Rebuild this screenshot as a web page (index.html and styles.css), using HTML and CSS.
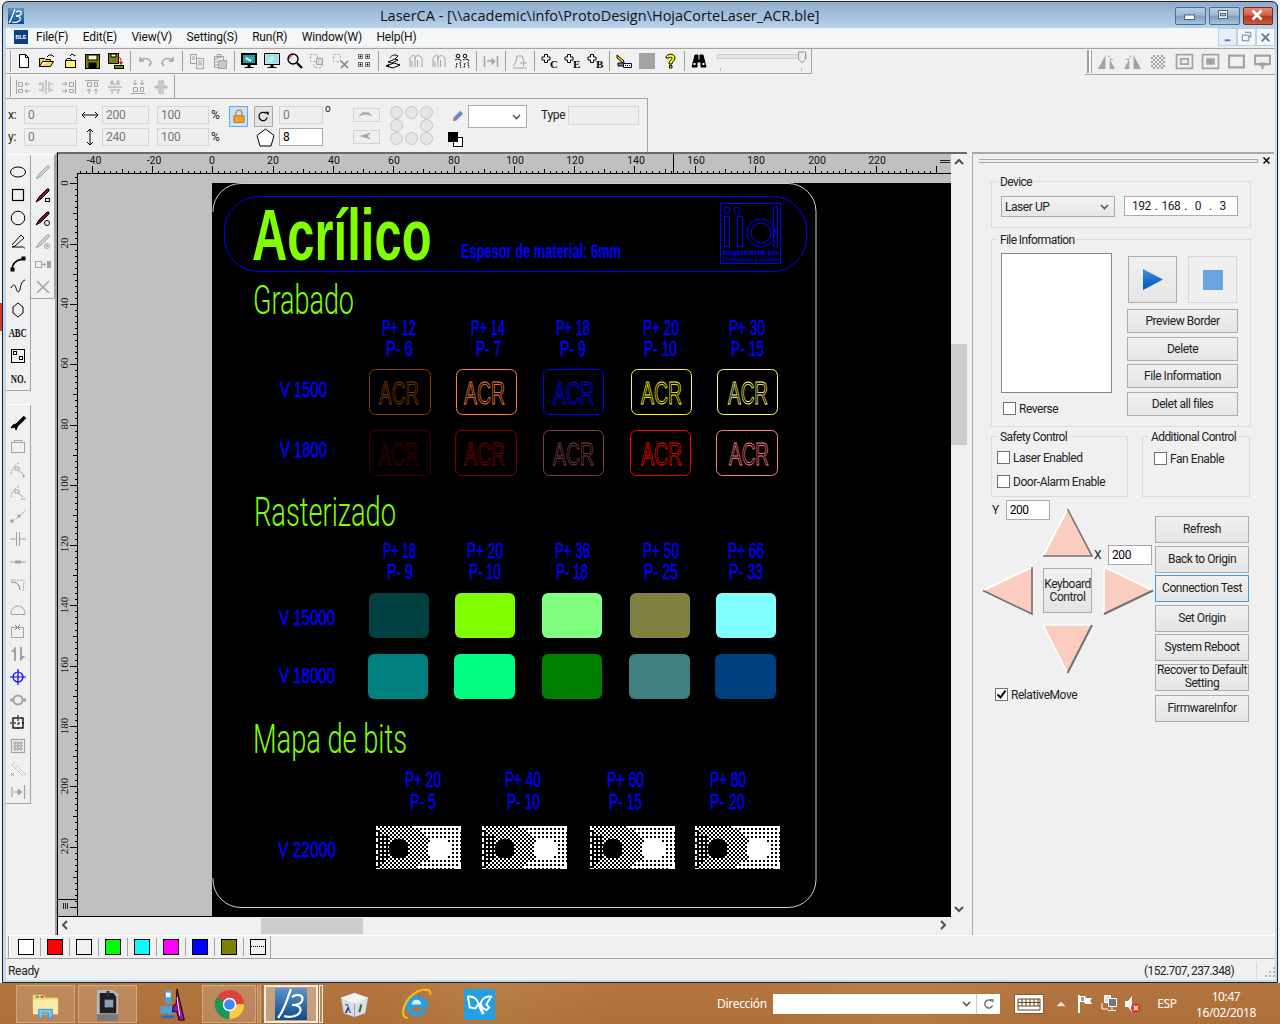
FILE: index.html
```html
<!DOCTYPE html>
<html lang="es">
<head>
<meta charset="utf-8">
<title>LaserCA</title>
<link rel="stylesheet" href="styles.css">
</head>
<body>
<div class="edge-mark"></div>
<div class="window">
  <header class="titlebar">
    <svg class="app-logo" viewBox="0 0 16 16"><defs><linearGradient id="lg1" x1="0" y1="0" x2="0" y2="1"><stop offset="0" stop-color="#5c93c9"/><stop offset="1" stop-color="#0f4a8f"/></linearGradient></defs><rect width="16" height="16" fill="url(#lg1)"/><path d="M7 1C5 5 4 11 1 15M8 4c3-2 6-1 5 2-1 2-4 2-5 2 3 0 5 1 4 4-1 2-5 3-8 2" fill="none" stroke="#fff" stroke-width="1.3"/></svg>
    <div class="title">LaserCA - [\\academic\info\ProtoDesign\HojaCorteLaser_ACR.ble]</div>
    <div class="winctl">
      <div class="wbtn"><svg viewBox="0 0 31 18" class="wglyph"><rect x="10" y="9" width="11" height="5" fill="#fff" stroke="#33506e"/></svg></div>
      <div class="wbtn"><svg viewBox="0 0 31 18" class="wglyph"><rect x="10" y="4" width="10" height="9" fill="#fff" stroke="#33506e"/><rect x="12" y="7" width="6" height="3" fill="#a9c2db" stroke="#33506e"/></svg></div>
      <div class="wbtn wclose"><svg viewBox="0 0 30 18" class="wglyph"><path d="M10 4l10 10M20 4L10 14" stroke="#fff" stroke-width="3" fill="none"/></svg></div>
    </div>
  </header>

  <nav class="menubar">
    <div class="mdi-logo">BLE</div>
    <span class="menu-item">File(F)</span><span class="menu-item">Edit(E)</span><span class="menu-item">View(V)</span><span class="menu-item">Setting(S)</span><span class="menu-item">Run(R)</span><span class="menu-item">Window(W)</span><span class="menu-item">Help(H)</span>
    <div class="mdi-ctl">
      <div class="mbtn mbtn-on"><svg viewBox="0 0 18 17"><path d="M6 12h6" stroke="#5f7fa3" stroke-width="2"/></svg></div>
      <div class="mbtn"><svg viewBox="0 0 18 17"><path d="M7.5 3.5h6v5h-2M4.5 6.5h7v6h-7z" fill="none" stroke="#5f7fa3"/></svg></div>
      <div class="mbtn"><svg viewBox="0 0 18 17"><path d="M5 5l8 8M13 5l-8 8" stroke="#5f7fa3" stroke-width="2"/></svg></div>
    </div>
  </nav>

  <div class="strip strip1">
    <div class="tb tb-main">
      <div class="tbtn"><svg class="ic" viewBox="0 0 16 16"><path d="M3.500 1.500h6l3 3v10h-9z" fill="#fff"/><path d="M9.500 1.500v3h3"/></svg></div>
      <div class="tbtn"><svg class="ic" viewBox="0 0 16 16"><path d="M.5 13.500v-8h5l1 1h5v2h-8l-3 5h11l3-5h-3" fill="#ffd24a"/><path d="M8 4l2-2h3l2 2"/></svg></div>
      <div class="tbtn"><svg class="ic" viewBox="0 0 16 16"><rect x="3.500" y="7.500" width="10" height="7" fill="#fff27a"/><path d="M3.500 7.500l2-2h3l1 2M8 3l2-2 3 2M13 3v-1"/></svg></div>
      <div class="tbtn"><svg class="ic" viewBox="0 0 16 16"><rect x=".5" y="1.500" width="14" height="14" fill="#808000"/><rect x="3" y="2" width="9" height="5" fill="#f4f4c8"/><rect x="4" y="10" width="7" height="5" fill="#000"/></svg></div>
      <div class="tbtn"><svg class="ic" viewBox="0 0 16 16"><rect x=".5" y=".5" width="10" height="10" fill="#808000"/><rect x="3" y="1" width="5" height="3" fill="#f4f4c8"/><rect x="6.500" y="12.500" width="9" height="3" fill="#808000"/><path d="M10 4c3 0 3 3 3 6" stroke="#e00000"/><path d="M11 9h4l-2 3z" fill="#e00000" stroke="none"/></svg></div>
      <div class="tsep"></div>
      <div class="tbtn"><svg class="ic off" viewBox="0 0 16 16"><path d="M3 4v4h4M3 8c3-4 10-3 11 2l-2 3" stroke-width="1.400"/></svg></div>
      <div class="tbtn"><svg class="ic off" viewBox="0 0 16 16"><path d="M13 4v4H9M13 8C10 4 3 5 2 10l2 3" stroke-width="1.400"/></svg></div>
      <div class="tsep"></div>
      <div class="tbtn"><svg class="ic off" viewBox="0 0 16 16"><path d="M1.500 1.500h6v9h-6zM7.500 5.500h7v10h-7zM3 4h3M3 6h3M9 8h4M9 10h4M9 12h4"/></svg></div>
      <div class="tbtn"><svg class="ic off" viewBox="0 0 16 16"><path d="M2.500 3.500h9v11h-9zM5 1.500h4v3H5z"/><path d="M6.500 7.500h8v8h-8z" fill="#c9c9c9"/><path d="M3 6h3M3 9h3M3 12h3"/></svg></div>
      <div class="tsep"></div>
      <div class="tbtn"><svg class="ic" viewBox="0 0 16 16"><rect x=".5" y=".5" width="15" height="11" fill="#000"/><rect x="2" y="2" width="12" height="8" fill="#00c8c8" stroke="none"/><path d="M3 3h10v6H3z" stroke="#e00000" stroke-dasharray="1 1"/><path d="M5 5l5 3" stroke="#fff" stroke-width="2"/><path d="M7 12h2v2H7zM3.500 14.500h9" fill="#000"/></svg></div>
      <div class="tbtn"><svg class="ic" viewBox="0 0 16 16"><rect x=".5" y=".5" width="15" height="11" fill="#dcdcdc"/><rect x="2" y="2" width="12" height="8" fill="#8fe4ee" stroke="none"/><path d="M3 9l6-6M6 9l5-5" stroke="#fff"/><path d="M7 12h2v2H7zM3.500 14.500h9" fill="#000"/></svg></div>
      <div class="tbtn"><svg class="ic" viewBox="0 0 16 16"><circle cx="6" cy="6" r="5" stroke-width="1.400"/><path d="M10 10l5 5" stroke-width="2.200"/><path d="M2.500 6a3.500 3.500 0 0 1 3-3.500" stroke="#d02020"/></svg></div>
      <div class="tbtn"><svg class="ic off" viewBox="0 0 16 16"><path d="M.5 1.500h7v7h-7z" stroke-dasharray="2 2"/><path d="M6.500 5.500h6v6h-6z" fill="#d8d8d8"/><path d="M4 11.500v3h8v-3" stroke-dasharray="2 2"/></svg></div>
      <div class="tbtn"><svg class="ic off" viewBox="0 0 16 16"><path d="M.5 1.500h7v7h-7z" stroke-dasharray="2 2"/><path d="M8 8l7 7M15 8l-7 7" stroke-width="1.600" stroke="#808080"/></svg></div>
      <div class="tbtn"><svg class="ic" viewBox="0 0 16 16"><path d="M2.500 1.500h4v4h-4zM9.500 1.500h4v4h-4zM2.500 9.500h4v4h-4zM9.500 9.500h4v4h-4z" stroke-dasharray="1 1"/><path d="M4 3h1v1H4zM11 3h1v1h-1zM4 11h1v1H4zM11 11h1v1h-1z"/></svg></div>
      <div class="tsep"></div>
      <div class="tbtn"><svg class="ic" viewBox="0 0 16 16"><path d="M1 13l8-3 6 2-7 3zM3 9l7-3 3 1-6 3zM5 5c1-3 6-4 8-2l-3 3M3 11l1 3"/></svg></div>
      <div class="tbtn"><svg class="ic off" viewBox="0 0 16 16"><path d="M2 14V6c0-3 3-4 5-3v11M7 6c0-3 3-4 5-3l2 2v9M4 8v6M9.500 7v7"/></svg></div>
      <div class="tbtn"><svg class="ic off" viewBox="0 0 16 16"><path d="M2 14V6c0-3 3-4 5-3v11M7 6c0-3 3-4 5-3l2 2v9M4 8v6M9.500 7v7"/></svg></div>
      <div class="tbtn"><svg class="ic" viewBox="0 0 16 16"><circle cx="4" cy="3" r="1.800"/><circle cx="11" cy="3" r="1.800"/><path d="M1 7c1-1 5-1 6 0l-1 3 1 5M3 10l-1 5M9 7c1-1 5-1 6 0l-1 3 1 5M11 10l-1 5" stroke-dasharray="2 .7"/></svg></div>
      <div class="tsep"></div>
      <div class="tbtn"><svg class="ic off" viewBox="0 0 16 16"><path d="M1.500 3v11M14.500 3v11M4 8h7" stroke-width="1.500"/><path d="M9 5.500l3 3-3 3z" fill="#a3a3a3"/></svg></div>
      <div class="tsep"></div>
      <div class="tbtn"><svg class="ic off" viewBox="0 0 16 16"><path d="M1 13l3-4 1-6h5l2 5M8 10h7M11.500 8v5M1 15h14"/></svg></div>
      <div class="tsep"></div>
      <div class="tbtn"><svg class="ic" viewBox="0 0 16 16"><path d="M3.500 1.500h3v2.500H9v3H6.500v2.500h-3V7H1V4h2.500z" fill="#fff"/><text class="ic-letter" x="9" y="15">C</text></svg></div>
      <div class="tbtn"><svg class="ic" viewBox="0 0 16 16"><path d="M3.500 1.500h3v2.500H9v3H6.500v2.500h-3V7H1V4h2.500z" fill="#fff"/><text class="ic-letter" x="9" y="15">E</text></svg></div>
      <div class="tbtn"><svg class="ic" viewBox="0 0 16 16"><path d="M3.500 1.500h3v2.500H9v3H6.500v2.500h-3V7H1V4h2.500z" fill="#fff"/><text class="ic-letter" x="9" y="15">B</text></svg></div>
      <div class="tsep"></div>
      <div class="tbtn"><svg class="ic" viewBox="0 0 16 16"><path d="M1 2l7 6-1 2-6-5z" fill="#ffd800"/><path d="M2 10h7v3H2z" fill="#808080"/><path d="M7.500 10.500h8v4h-8z" fill="#fff" stroke="#000080"/><path d="M9 12.500h1M11 12.500h1M13 12.500h1" stroke="#000080"/></svg></div>
      <div class="tbtn"><div class="gray-sq"></div></div>
      <div class="tbtn"><svg class="ic" viewBox="0 0 16 16"><path d="M4 5c0-5 9-5 9 0 0 3-3 3-3 6H7c0-4 3-4 3-6 0-1-3-1-3 0z" fill="#ffff00"/><path d="M7.500 12.500h2.500v2.500H7.500z" fill="#ffff00"/></svg></div>
      <div class="tsep"></div>
      <div class="tbtn"><svg class="ic" viewBox="0 0 16 16"><path d="M4 2h3v5h2V2h3l3 12h-5V9H6v5H1z" fill="#000"/><rect x="2.500" y="10" width="2" height="2" fill="#fff" stroke="none"/><rect x="11.500" y="10" width="2" height="2" fill="#fff" stroke="none"/></svg></div>
      <div class="tslider"><div class="tslider-track"></div><svg class="tslider-thumb" viewBox="0 0 8 12"><path d="M.5.5h7v7L4 11.500.5 7.500z" fill="#ececec" stroke="#9a9a9a"/></svg><i class="tslider-tick tick-a"></i><i class="tslider-tick tick-b"></i></div>
    </div>
    <div class="tb tb-right">
      <div class="rbtn"><svg class="ic off" viewBox="0 0 16 16"><path d="M7 2v13H0zM9 2l2 1-1 2 5 1-4 1v8h5z" fill="#a3a3a3" stroke="none"/></svg></div>
      <div class="rbtn"><svg class="ic off" viewBox="0 0 16 16"><path d="M9 2v13h7zM7 2L5 3l1 2-5 1 4 1v8H0z" fill="#a3a3a3" stroke="none"/></svg></div>
      <div class="rbtn"><div class="checker"></div></div>
      <div class="rbtn"><svg class="ic off" viewBox="0 0 16 16"><path d="M.5 1.500h15v13H.5zM4.500 5.500h7v5h-7z" stroke-width="1.600"/></svg></div>
      <div class="rbtn"><svg class="ic off" viewBox="0 0 16 16"><path d="M.5 1.500h15v13H.5z" stroke-width="1.600"/><rect x="4" y="5" width="8" height="6" fill="#a3a3a3" stroke="none"/></svg></div>
      <div class="rbtn"><svg class="ic off" viewBox="0 0 16 16"><path d="M1 2.500h14v11H1z" stroke-width="2"/></svg></div>
      <div class="rbtn"><svg class="ic off" viewBox="0 0 16 16"><path d="M1 2.500h14v8H1z" stroke-width="2"/><path d="M5 9h6v3H9v3H7v-3H5z" fill="#a3a3a3" stroke="none"/></svg></div>
    </div>
  </div>

  <div class="strip strip2">
    <div class="tb tb-align">
      <div class="abtn"><svg class="ic off" viewBox="0 0 16 16"><path d="M1.500 1v14M3.500 3.500h4v4h-4zM3.500 10.500h4v3h-4zM15 5h-5M10 5l2-2M10 5l2 2M15 12h-5M10 12l2-2M10 12l2 2"/></svg></div>
      <div class="abtn"><svg class="ic off" viewBox="0 0 16 16"><path d="M8 1v14M5 3v10M11 3v10M1 5h3M1 5l1.500-1.500M1 11h3M15 5h-3M15 11h-3"/></svg></div>
      <div class="abtn"><svg class="ic off" viewBox="0 0 16 16"><path d="M14.500 1v14M8.500 3.500h4v4h-4zM8.500 10.500h4v3h-4zM1 5h5M6 5L4 3M6 5L4 7M1 12h5M6 12l-2-2M6 12l-2 2"/></svg></div>
      <div class="abtn"><svg class="ic off" viewBox="0 0 16 16"><path d="M1 1.500h14M3.500 3.500h4v4h-4zM10.500 3.500h3v4h-3zM5 15v-5M5 10l-2 2M5 10l2 2M12 15v-5M12 10l-2 2M12 10l2 2"/></svg></div>
      <div class="abtn"><svg class="ic off" viewBox="0 0 16 16"><path d="M1 8h14M3 5h10M3 11h10M5 1v3M5 4L3.500 2.500M5 4l1.500-1.500M11 1v3M11 4L9.500 2.500M11 4l1.500-1.500M5 15v-3M11 15v-3"/></svg></div>
      <div class="abtn"><svg class="ic off" viewBox="0 0 16 16"><path d="M1 14.500h14M3.500 8.500h4v4h-4zM10.500 8.500h3v4h-3zM5 1v5M5 6L3 4M5 6l2-2M12 1v5M12 6l-2-2M12 6l2-2"/></svg></div>
      <div class="abtn"><svg class="ic off" viewBox="0 0 16 16"><path d="M8 1v14M6 1v14M10 1v14M1 8h4M5 8L3 6M5 8l-2 2M15 8h-4M11 8l2-2M11 8l2 2"/></svg></div>
    </div>
  </div>

  <div class="props-row">
  <section class="props">
    <span class="plabel">x:</span>
    <input class="field off" value="0" readonly>
    <svg class="parrow" viewBox="0 0 18 8"><path d="M1 4h16M4 1L1 4l3 3M14 1l3 3-3 3" fill="none" stroke="#000"/></svg>
    <input class="field off" value="200" readonly>
    <input class="field off ml8" value="100" readonly>
    <span class="plabel pct">%</span>
    <div class="lock-btn"><svg viewBox="0 0 14 16"><path d="M3.500 7V4a3.500 3.500 0 0 1 7 0v3" fill="none" stroke="#c98a1c" stroke-width="1.500"/><rect x="1" y="7" width="12" height="8" rx="1" fill="#f2a02c" stroke="#b96d10"/></svg></div>
    <div class="rot-btn"><svg viewBox="0 0 14 14"><path d="M11 8a4.500 4.500 0 1 1-1.500-4.500" fill="none" stroke="#000" stroke-width="1.300"/><path d="M8.500 2h4v4z" fill="#000"/></svg></div>
    <input class="field off ml6" value="0" readonly>
    <span class="deg">o</span>
    <div class="mini-btn"><svg viewBox="0 0 27 14"><path d="M5 10l5-5h7l5 5-6-2h-5z" fill="#a8a8a8"/></svg></div>
    <svg class="circles" viewBox="0 0 43 39"><g fill="#e6e6e6" stroke="#c6c6c6"><circle cx="6.500" cy="6.500" r="6"/><circle cx="21.500" cy="6.500" r="6"/><circle cx="36.500" cy="6.500" r="6"/><circle cx="6.500" cy="19.500" r="6"/><circle cx="36.500" cy="19.500" r="6"/><circle cx="6.500" cy="32.500" r="6"/><circle cx="21.500" cy="32.500" r="6"/><circle cx="36.500" cy="32.500" r="6"/></g></svg>
    <svg class="pencil" viewBox="0 0 14 14"><path d="M1 13l1-4 7-7 3 3-7 7z" fill="#7089c9"/><path d="M1 13l1-4 3 3z" fill="#d46a5a"/></svg>
    <div class="combo combo-color"><svg class="chev" viewBox="0 0 9 6"><path d="M1 1l3.500 3.500L8 1" fill="none" stroke="#555" stroke-width="1.600"/></svg></div>
    <span class="plabel type-l">Type</span>
    <input class="field off type-i" value="" readonly>

    <span class="plabel">y:</span>
    <input class="field off" value="0" readonly>
    <svg class="parrow parrow-v" viewBox="0 0 8 18"><path d="M4 1v16M1 4l3-3 3 3M1 14l3 3 3-3" fill="none" stroke="#000"/></svg>
    <input class="field off" value="240" readonly>
    <input class="field off ml8" value="100" readonly>
    <span class="plabel pct">%</span>
    <span></span>
    <svg class="pentagon" viewBox="0 0 19 19"><path d="M9.500 1L18 7.500 15 18H4L1 7.500z" fill="#fff" stroke="#000"/></svg>
    <input class="field ml6" value="8" readonly>
    <span></span>
    <div class="mini-btn mini-b"><svg viewBox="0 0 27 14"><path d="M6 7l14-4-4 4 4 4z" fill="#a8a8a8"/></svg></div>
    <div class="color-pair"><i class="cp-back"></i><i class="cp-front"></i></div>
  </section>
  </div>

  <div class="workspace">
    <aside class="dock-left">
      <div class="dock-cols">
        <div class="vtb">
          <div class="vbtn"><svg class="ic" viewBox="0 0 16 16"><ellipse cx="8" cy="8" rx="7.500" ry="5"/></svg></div>
          <div class="vbtn"><svg class="ic" viewBox="0 0 16 16"><rect x="2.500" y="2.500" width="11" height="11" stroke-width="1.200"/></svg></div>
          <div class="vbtn"><svg class="ic" viewBox="0 0 16 16"><circle cx="8" cy="8" r="6.800"/></svg></div>
          <div class="vbtn"><svg class="ic" viewBox="0 0 16 16"><path d="M2 12l9-10 3 3-9 8-3 1h11c1 0 1 1.500 2 1"/></svg></div>
          <div class="vbtn"><svg class="ic" viewBox="0 0 16 16"><path d="M2 14c0-6 4-10 11-11" stroke-width="1.400"/><rect x="1" y="12" width="3" height="3" fill="#000"/><rect x="12" y="1" width="3" height="3" fill="#000"/></svg></div>
          <div class="vbtn"><svg class="ic" viewBox="0 0 16 16"><path d="M1 9c2-4 4-4 5 0s3 6 4 1 2-8 5-9"/></svg></div>
          <div class="vbtn"><svg class="ic" viewBox="0 0 16 16"><path d="M8 1l5 4v6l-5 4-5-4V5z"/></svg></div>
          <div class="vbtn"><span class="tool-text">ABC</span></div>
          <div class="vbtn"><svg class="ic" viewBox="0 0 16 16"><rect x="1.500" y="1.500" width="13" height="13"/><rect x="3.500" y="3.500" width="3" height="3"/><rect x="9.500" y="8.500" width="3" height="3"/></svg></div>
          <div class="vbtn"><span class="tool-text">NO.</span></div>
        </div>
        <div class="vtb vtb-b">
          <div class="vbtn"><svg class="ic off" viewBox="0 0 16 16"><path d="M1 15l3-5 8-8h2v2l-8 8z" fill="#cfcfcf"/></svg></div>
          <div class="vbtn"><svg class="ic" viewBox="0 0 16 16"><path d="M1 15l3-5 8-8h2v2l-8 8z" fill="#7a1020"/><rect x="10.500" y="11.500" width="4" height="3"/></svg></div>
          <div class="vbtn"><svg class="ic" viewBox="0 0 16 16"><path d="M1 15l3-5 8-8h2v2l-8 8z" fill="#7a1020"/><circle cx="12" cy="13" r="2.500"/></svg></div>
          <div class="vbtn"><svg class="ic off" viewBox="0 0 16 16"><path d="M1 15l3-5 8-8h2v2l-8 8z" fill="#cfcfcf"/><circle cx="12" cy="13" r="2.500"/><circle cx="12" cy="13" r=".8" fill="#a3a3a3"/></svg></div>
          <div class="vbtn"><svg class="ic off" viewBox="0 0 16 16"><rect x=".5" y="5.500" width="6" height="6"/><path d="M7 8.500h3M8.500 6.500l2 2-2 2"/><rect x="12" y="5" width="4" height="7" fill="#a3a3a3" stroke="none"/></svg></div>
          <div class="vbtn"><svg class="ic off" viewBox="0 0 16 16"><path d="M2 2l12 12M14 2L2 14" stroke-width="1.500"/></svg></div>
        </div>
      </div>
      <div class="vtb vtb-c">
        <div class="vbtn"><svg class="ic" viewBox="0 0 16 16"><path d="M15 1L7 9" stroke-width="3.400"/><path d="M7 8c-3 0-5 1-6 4l4-1 1 3c1-2 2-4 1-6z" fill="#000"/></svg></div>
        <div class="vbtn"><svg class="ic off" viewBox="0 0 16 16"><rect x="1.500" y="3.500" width="13" height="10"/><path d="M4 3V1.500h8V3"/></svg></div>
        <div class="vbtn"><svg class="ic off" viewBox="0 0 16 16"><path d="M1 12C2 6 5 3 9 1" stroke-dasharray="2 1"/><path d="M5 5h4v3H5zM8 8l5 4"/><path d="M12 14h3M13.500 12.500v3"/></svg></div>
        <div class="vbtn"><svg class="ic off" viewBox="0 0 16 16"><path d="M1 12C2 6 5 3 9 1" stroke-dasharray="2 1"/><path d="M5 5h4v3H5zM8 8l5 4"/><path d="M11 14h4"/></svg></div>
        <div class="vbtn"><svg class="ic off" viewBox="0 0 16 16"><path d="M1 14c3 0 3-3 6-4s5-4 8-8" stroke-dasharray="2 1"/><rect x="1" y="12" width="2" height="2" fill="#a3a3a3"/><rect x="8" y="7" width="2" height="2" fill="#a3a3a3"/></svg></div>
        <div class="vbtn"><svg class="ic off" viewBox="0 0 16 16"><path d="M6.500 1v14M9.500 1v14M0 8h6M10 8h6"/></svg></div>
        <div class="vbtn"><svg class="ic off" viewBox="0 0 16 16"><path d="M0 8h16"/><rect x="5" y="6.500" width="6" height="3" fill="#a3a3a3" stroke="none"/></svg></div>
        <div class="vbtn"><svg class="ic off" viewBox="0 0 16 16"><path d="M1 3c6 0 12 0 13 1l-1 10" stroke-dasharray="2 1"/><path d="M1 5c6 0 8 2 9 8" stroke="#808080"/></svg></div>
        <div class="vbtn"><svg class="ic off" viewBox="0 0 16 16"><path d="M1 14.500h14M1 14c0-5 3-8 7-8s7 3 7 8"/></svg></div>
        <div class="vbtn"><svg class="ic off" viewBox="0 0 16 16"><rect x="1.500" y="4.500" width="12" height="10"/><path d="M5 2l5 5M10 2L5 7" stroke="#808080"/></svg></div>
        <div class="vbtn"><svg class="ic off" viewBox="0 0 16 16"><path d="M5 1L1 6h3v9h2V1zM11 15l4-5h-3V1h-2v14z" fill="#a3a3a3" stroke="none"/></svg></div>
        <div class="vbtn"><svg class="ic blue" viewBox="0 0 16 16"><circle cx="8" cy="8" r="5" stroke-width="1.200"/><path d="M0 8h16M8 0v16" stroke-width="1.200"/></svg></div>
        <div class="vbtn"><svg class="ic off" viewBox="0 0 16 16"><circle cx="8" cy="8" r="4.500" stroke-width="2"/><path d="M0 8h4M12 8h4" stroke-width="3"/></svg></div>
        <div class="vbtn"><svg class="ic" viewBox="0 0 16 16"><rect x="3" y="3" width="10" height="10" stroke-width="1.300"/><path d="M8 0v15M0 8h15" stroke-dasharray="2 2"/></svg></div>
        <div class="vbtn"><svg class="ic off" viewBox="0 0 16 16"><rect x="1.500" y="1.500" width="13" height="13" stroke-width="1.200"/><path d="M4 4h2v2H4zM7 4h2v2H7zM10 4h2v2h-2zM4 7h2v2H4zM7 7h2v2H7zM10 7h2v2h-2zM4 10h2v2H4zM7 10h2v2H7zM10 10h2v2h-2z"/></svg></div>
        <div class="vbtn"><svg class="ic off" viewBox="0 0 16 16"><path d="M3 1l13 13M1 3l13 13" stroke-dasharray="1 1"/><path d="M1 12l3 3M4 12l-3 3"/></svg></div>
        <div class="vbtn"><svg class="ic off" viewBox="0 0 16 16"><path d="M14.500 1v14M2 3v4M2 9v4M0 8h10" stroke-width="1.200"/><path d="M8 5l4 3-4 3z" fill="#a3a3a3"/></svg></div>
      </div>
    </aside>

    <main class="view">
      <svg class="sheet" viewBox="58 154 893 762">
        <rect class="bg-gray" x="58" y="154" width="893" height="762"/>
        <rect class="bg-black" x="212" y="183" width="739" height="733"/>
        <path class="ticks" id="ticks-h"/>
        <path class="ticks" id="ticks-v"/>
        <path class="ruler-tracker" d="M673 154v19M58 899h19"/>
        <path class="ruler-end" d="M940 160h10M940 162h10M63 903v6M65 903v6M67 903v6"/>

        <g class="ruler-h">
          <text x="94" y="164">-40</text><text x="154" y="164">-20</text><text x="212" y="164">0</text><text x="273" y="164">20</text><text x="334" y="164">40</text><text x="394" y="164">60</text><text x="454" y="164">80</text><text x="515" y="164">100</text><text x="575" y="164">120</text><text x="636" y="164">140</text><text x="696" y="164">160</text><text x="756" y="164">180</text><text x="817" y="164">200</text><text x="877" y="164">220</text>
        </g>
        <g class="ruler-v">
          <text transform="translate(68 183) rotate(-90)">0</text><text transform="translate(68 243) rotate(-90)">20</text><text transform="translate(68 303) rotate(-90)">40</text><text transform="translate(68 363) rotate(-90)">60</text><text transform="translate(68 424) rotate(-90)">80</text><text transform="translate(68 484) rotate(-90)">100</text><text transform="translate(68 544) rotate(-90)">120</text><text transform="translate(68 605) rotate(-90)">140</text><text transform="translate(68 665) rotate(-90)">160</text><text transform="translate(68 726) rotate(-90)">180</text><text transform="translate(68 786) rotate(-90)">200</text><text transform="translate(68 846) rotate(-90)">220</text>
        </g>

        <rect class="plate" x="213" y="183.500" width="603" height="724" rx="28"/>
        <rect class="band" x="224.500" y="196.500" width="582" height="75" rx="34"/>
        <rect class="page-edge" x="212" y="212" width="2" height="666"/>

        <text class="h-big" transform="translate(252 260) scale(.68 1)">Acrílico</text>
        <text class="sub" x="461" y="258" textLength="160" lengthAdjust="spacingAndGlyphs">Espesor de material: 6mm</text>
        <text class="h-sec" x="253" y="314" textLength="101" lengthAdjust="spacingAndGlyphs">Grabado</text>
        <text class="h-sec" x="254" y="526" textLength="142" lengthAdjust="spacingAndGlyphs">Rasterizado</text>
        <text class="h-sec" x="253" y="753" textLength="154" lengthAdjust="spacingAndGlyphs">Mapa de bits</text>

        <g class="logo">
          <rect x="720.500" y="203.500" width="60" height="60"/>
          <rect x="724.500" y="216.500" width="5" height="30"/><circle cx="727" cy="210" r="3"/>
          <rect x="737.500" y="216.500" width="5" height="30"/><circle cx="737" cy="210" r="3"/>
          <circle cx="761" cy="233" r="14"/><circle cx="761" cy="233" r="10"/>
          <path d="M773.500 206.500h4v40h-4z"/>
          <text class="logo-t" x="723" y="255" textLength="55" lengthAdjust="spacingAndGlyphs">Ingeniería en</text>
          <text class="logo-t2" x="723" y="261" textLength="55" lengthAdjust="spacingAndGlyphs">Innovación y diseño</text>
        </g>

        <g class="par">
          <text x="382" y="335" textLength="34" lengthAdjust="spacingAndGlyphs">P+ 12</text><text x="386" y="356" textLength="27" lengthAdjust="spacingAndGlyphs">P- 6</text>
          <text x="471" y="335" textLength="34" lengthAdjust="spacingAndGlyphs">P+ 14</text><text x="476" y="356" textLength="25" lengthAdjust="spacingAndGlyphs">P- 7</text>
          <text x="556" y="335" textLength="34" lengthAdjust="spacingAndGlyphs">P+ 18</text><text x="560" y="356" textLength="26" lengthAdjust="spacingAndGlyphs">P- 9</text>
          <text x="643" y="335" textLength="36" lengthAdjust="spacingAndGlyphs">P+ 20</text><text x="644" y="356" textLength="33" lengthAdjust="spacingAndGlyphs">P- 10</text>
          <text x="729" y="335" textLength="36" lengthAdjust="spacingAndGlyphs">P+ 30</text><text x="731" y="356" textLength="33" lengthAdjust="spacingAndGlyphs">P- 15</text>
          <text x="280" y="397" textLength="47" lengthAdjust="spacingAndGlyphs">V 1500</text><text x="280" y="457" textLength="47" lengthAdjust="spacingAndGlyphs">V 1800</text>

          <text x="383" y="558" textLength="33" lengthAdjust="spacingAndGlyphs">P+ 18</text><text x="387" y="579" textLength="26" lengthAdjust="spacingAndGlyphs">P- 9</text>
          <text x="467" y="558" textLength="36" lengthAdjust="spacingAndGlyphs">P+ 20</text><text x="469" y="579" textLength="32" lengthAdjust="spacingAndGlyphs">P- 10</text>
          <text x="555" y="558" textLength="35" lengthAdjust="spacingAndGlyphs">P+ 36</text><text x="556" y="579" textLength="32" lengthAdjust="spacingAndGlyphs">P- 18</text>
          <text x="643" y="558" textLength="36" lengthAdjust="spacingAndGlyphs">P+ 50</text><text x="644" y="579" textLength="34" lengthAdjust="spacingAndGlyphs">P- 25</text>
          <text x="728" y="558" textLength="36" lengthAdjust="spacingAndGlyphs">P+ 66</text><text x="729" y="579" textLength="34" lengthAdjust="spacingAndGlyphs">P- 33</text>
          <text x="279" y="625" textLength="56" lengthAdjust="spacingAndGlyphs">V 15000</text><text x="279" y="683" textLength="56" lengthAdjust="spacingAndGlyphs">V 18000</text>

          <text x="405" y="787" textLength="36" lengthAdjust="spacingAndGlyphs">P+ 20</text><text x="410" y="809" textLength="26" lengthAdjust="spacingAndGlyphs">P- 5</text>
          <text x="505" y="787" textLength="36" lengthAdjust="spacingAndGlyphs">P+ 40</text><text x="507" y="809" textLength="33" lengthAdjust="spacingAndGlyphs">P- 10</text>
          <text x="607" y="787" textLength="37" lengthAdjust="spacingAndGlyphs">P+ 60</text><text x="609" y="809" textLength="33" lengthAdjust="spacingAndGlyphs">P- 15</text>
          <text x="710" y="787" textLength="36" lengthAdjust="spacingAndGlyphs">P+ 80</text><text x="710" y="809" textLength="35" lengthAdjust="spacingAndGlyphs">P- 20</text>
          <text x="278" y="857" textLength="58" lengthAdjust="spacingAndGlyphs">V 22000</text>
        </g>

        <g class="acr c804000"><rect x="369.500" y="369.500" width="61" height="45" rx="6"/><text x="379" y="404" textLength="40" lengthAdjust="spacingAndGlyphs">ACR</text></g>
        <g class="acr cff8040"><rect x="456.500" y="369.500" width="60" height="45" rx="6"/><text x="464" y="404" textLength="41" lengthAdjust="spacingAndGlyphs">ACR</text></g>
        <g class="acr c0000ff"><rect x="543.500" y="369.500" width="60" height="45" rx="6"/><text x="553" y="404" textLength="41" lengthAdjust="spacingAndGlyphs">ACR</text></g>
        <g class="acr cffff00"><rect x="631.500" y="369.500" width="60" height="45" rx="6"/><text x="641" y="404" textLength="41" lengthAdjust="spacingAndGlyphs">ACR</text></g>
        <g class="acr cffff80"><rect x="717.500" y="369.500" width="60" height="45" rx="6"/><text x="728" y="404" textLength="40" lengthAdjust="spacingAndGlyphs">ACR</text></g>
        <g class="acr c400000"><rect x="369.500" y="430.500" width="61" height="45" rx="6"/><text x="378" y="465" textLength="41" lengthAdjust="spacingAndGlyphs">ACR</text></g>
        <g class="acr c800000"><rect x="455.500" y="430.500" width="61" height="45" rx="6"/><text x="464" y="465" textLength="41" lengthAdjust="spacingAndGlyphs">ACR</text></g>
        <g class="acr c804040"><rect x="543.500" y="430.500" width="60" height="45" rx="6"/><text x="553" y="465" textLength="41" lengthAdjust="spacingAndGlyphs">ACR</text></g>
        <g class="acr cff0000"><rect x="630.500" y="430.500" width="60" height="45" rx="6"/><text x="641" y="465" textLength="41" lengthAdjust="spacingAndGlyphs">ACR</text></g>
        <g class="acr cff8080"><rect x="716.500" y="430.500" width="61" height="45" rx="6"/><text x="729" y="465" textLength="40" lengthAdjust="spacingAndGlyphs">ACR</text></g>

        <rect class="f004040" x="369" y="593" width="60" height="45" rx="6"/>
        <rect class="f80ff00" x="455" y="593" width="60" height="45" rx="6"/>
        <rect class="f80ff80" x="542" y="593" width="60" height="45" rx="6"/>
        <rect class="f808040" x="630" y="593" width="60" height="45" rx="6"/>
        <rect class="f80ffff" x="716" y="593" width="60" height="45" rx="6"/>
        <rect class="f008080" x="368" y="654" width="60" height="45" rx="6"/>
        <rect class="f00ff80" x="454" y="654" width="61" height="45" rx="6"/>
        <rect class="f008000" x="542" y="654" width="60" height="45" rx="6"/>
        <rect class="f408080" x="629" y="654" width="61" height="45" rx="6"/>
        <rect class="f004080" x="715" y="654" width="61" height="45" rx="6"/>

        <path class="dither" id="d1" transform="translate(376 826)"/>
        <path class="dither" id="d2" transform="translate(482 826)"/>
        <path class="dither" id="d3" transform="translate(590 826)"/>
        <path class="dither" id="d4" transform="translate(695 826)"/>
      </svg>

      <div class="vscroll">
        <svg class="sb-arrow" viewBox="0 0 16 16"><path d="M4 10l4-4 4 4" fill="none" stroke="#505050" stroke-width="2"/></svg>
        <div class="vthumb"></div>
        <svg class="sb-arrow sb-end" viewBox="0 0 16 16"><path d="M4 6l4 4 4-4" fill="none" stroke="#505050" stroke-width="2"/></svg>
      </div>
      <div class="hscroll">
        <svg class="sb-arrow" viewBox="0 0 16 16"><path d="M10 4L6 8l4 4" fill="none" stroke="#505050" stroke-width="2"/></svg>
        <div class="hthumb"></div>
        <svg class="sb-arrow sb-end-h" viewBox="0 0 16 16"><path d="M6 4l4 4-4 4" fill="none" stroke="#505050" stroke-width="2"/></svg>
      </div>
      <div class="corner"></div>
    </main>

    <aside class="panel">
      <div class="panel-head"><div class="grip"></div><svg class="panel-x" viewBox="0 0 7 7"><path d="M.5.5l6 6M6.500.5l-6 6" stroke="#000" stroke-width="1.500"/></svg></div>

      <div class="group g-device">
        <span class="legend">Device</span>
        <div class="combo combo-laser"><span>Laser UP</span><svg class="chev" viewBox="0 0 9 6"><path d="M1 1l3.500 3.500L8 1" fill="none" stroke="#555" stroke-width="1.600"/></svg></div>
        <div class="ip">192 . 168 .  0  .  3</div>
      </div>

      <div class="group g-file">
        <span class="legend">File Information</span>
        <div class="file-left">
          <div class="file-list"></div>
          <label class="chk chk-rev"><i class="box"></i>Reverse</label>
        </div>
        <div class="file-right">
          <div class="play-row">
            <div class="btn big"><svg viewBox="0 0 20 21" class="play"><defs><linearGradient id="pg" x1="0" y1="0" x2="0" y2="1"><stop offset="0" stop-color="#3d8fe0"/><stop offset="1" stop-color="#0052b8"/></linearGradient></defs><path d="M0 0l20 10.500L0 21z" fill="url(#pg)"/></svg></div>
            <div class="btn big big-off"><div class="stop"></div></div>
          </div>
          <div class="btn act">Preview Border</div>
          <div class="btn act">Delete</div>
          <div class="btn act">File Information</div>
          <div class="btn act">Delet all files</div>
        </div>
      </div>

      <div class="group-row">
        <div class="group g-safe">
          <span class="legend">Safety Control</span>
          <label class="chk"><i class="box"></i>Laser Enabled</label>
          <label class="chk"><i class="box"></i>Door-Alarm Enable</label>
        </div>
        <div class="group g-add">
          <span class="legend">Additional Control</span>
          <label class="chk"><i class="box"></i>Fan Enable</label>
        </div>
      </div>

      <div class="lower">
        <div class="pad-col">
          <div class="pad">
            <div class="y-cell"><span>Y</span><input class="field" value="200" readonly></div>
            <svg class="tri up" viewBox="0 0 49 47"><path d="M24.500 0L49 47H0z" fill="#fbcdc1"/><path d="M24.500 0L0 47" stroke="#fff" stroke-width="2" fill="none"/><path d="M24.500 0L49 47H0" stroke="#707070" stroke-width="1.600" fill="none"/></svg>
            <div class="x-cell"><span>X</span><input class="field" value="200" readonly></div>
            <svg class="tri left" viewBox="0 0 49 47"><path d="M49 0L0 23.500 49 47z" fill="#fbcdc1"/><path d="M0 23.500L49 0" stroke="#fff" stroke-width="2" fill="none"/><path d="M49 0v47L0 23.500" stroke="#707070" stroke-width="1.600" fill="none"/></svg>
            <div class="btn kb">Keyboard<br>Control</div>
            <svg class="tri right" viewBox="0 0 49 47"><path d="M0 0L49 23.500 0 47z" fill="#fbcdc1"/><path d="M0 47V0L49 23.500" stroke="#fff" stroke-width="1.600" fill="none"/><path d="M49 23.500L0 47" stroke="#707070" stroke-width="2" fill="none"/></svg>
            <span></span>
            <svg class="tri down" viewBox="0 0 49 48"><path d="M0 0h49L24.500 48z" fill="#fbcdc1"/><path d="M24.500 48L0 0h49" stroke="#fff" stroke-width="1.600" fill="none"/><path d="M49 0L24.500 48" stroke="#707070" stroke-width="2" fill="none"/></svg>
          </div>
          <label class="chk chk-rel"><i class="box"><svg viewBox="0 0 11 11"><path d="M1.500 5.500l3 3 5-7" fill="none" stroke="#000" stroke-width="2"/></svg></i>RelativeMove</label>
        </div>
        <div class="cmd-col">
          <div class="btn cmd">Refresh</div>
          <div class="btn cmd">Back to Origin</div>
          <div class="btn cmd cmd-focus">Connection Test</div>
          <div class="btn cmd">Set Origin</div>
          <div class="btn cmd">System Reboot</div>
          <div class="btn cmd cmd-two">Recover to Default<br>Setting</div>
          <div class="btn cmd cmd-last">FirmwareInfor</div>
        </div>
      </div>
    </aside>
  </div>

  <div class="colorbar">
    <div class="cb-tools">
      <div class="cbtn"><i class="sw swwhite"></i></div><div class="csep"></div>
      <div class="cbtn"><i class="sw swred"></i></div><div class="csep"></div>
      <div class="cbtn"><i class="sw swnone"></i></div><div class="csep"></div>
      <div class="cbtn"><i class="sw swgreen"></i></div><div class="csep"></div>
      <div class="cbtn"><i class="sw swcyan"></i></div><div class="csep"></div>
      <div class="cbtn"><i class="sw swmag"></i></div><div class="csep"></div>
      <div class="cbtn"><i class="sw swblue"></i></div><div class="csep"></div>
      <div class="cbtn"><i class="sw swolive"></i></div><div class="csep"></div>
      <div class="cbtn"><i class="sw swdash"></i></div>
    </div>
  </div>

  <footer class="statusbar">
    <span class="status-text">Ready</span>
    <span class="status-pos">(152.707, 237.348)</span>
    <div class="status-grip"><svg viewBox="0 0 12 12"><path d="M9 1h2v2H9zM5 5h2v2H5zM9 5h2v2H9zM1 9h2v2H1zM5 9h2v2H5zM9 9h2v2H9z" fill="#b8b8b8"/></svg></div>
  </footer>
</div>

<div class="taskbar">
  <div class="task task-w59"><svg class="task-ic" viewBox="0 0 32 32"><path d="M3 6h11l2 3h13v17H3z" fill="#f5d97b"/><path d="M3 11h26v15H3z" fill="#fbe9a7"/><path d="M9 21h14v9h-4v-5h-6v5H9z" fill="#7ec3e8" stroke="#3f94c8"/><path d="M6 7h3v2H6z" fill="#2fa84f"/><path d="M11 7h3v2h-3z" fill="#d33"/></svg></div>
  <div class="task task-w59"><svg class="task-ic" viewBox="0 0 32 34"><path d="M5 2h16l6 4v28H5z" fill="#b9b9b9"/><path d="M8 5h14l3 4v17H8z" fill="#1e1e1e"/><path d="M13 12h9v8h-9z" fill="#8aa0b8"/><path d="M5 27h22v7H5z" fill="#7a7a7a"/><path d="M15 3h3v6h-3z" fill="#333"/></svg></div>
  <div class="task-pin pin-a"><svg class="task-ic" viewBox="0 0 32 36"><path d="M5 30h14v3H5z" fill="#1f6fc2"/><path d="M9 3h7v14H9zM4 20h17v8H4z" fill="#4aa3df"/><path d="M10 5h5v5h-5z" fill="#dff"/><path d="M22 1l8 34h-6l-2-9-5 0 1-7 3-1z" fill="#a0109a" stroke="#000"/><path d="M22 10l3 20" stroke="#fff"/></svg></div>
  <div class="task task-w54 ml-chrome"><svg class="task-ic" viewBox="0 0 32 32"><circle cx="16" cy="16" r="15" fill="#db4437"/><path d="M16 16L3 23.500A15 15 0 0 0 16 31z" fill="#0f9d58"/><path d="M3 23.500A15 15 0 0 1 3 8.500L16 16z" fill="#0f9d58"/><path d="M16 16h15a15 15 0 0 1-15 15z" fill="#ffcd40"/><path d="M16 31L24 16h7a15 15 0 0 1-15 15z" fill="#ffcd40"/><circle cx="16" cy="16" r="7" fill="#fff"/><circle cx="16" cy="16" r="5.500" fill="#4285f4"/></svg></div>
  <div class="task-stub"></div>
  <div class="task task-w54 task-on ml-active"><svg class="task-ic task-logo" viewBox="0 0 32 32"><rect width="32" height="32" fill="url(#lg1)"/><path d="M16 1c-4 10-6 20-13 29M17 9c6-4 12-2 10 4-2 4-8 4-10 4 6 0 10 2 8 7-2 4-10 6-16 4" fill="none" stroke="#fff" stroke-width="2.200"/></svg></div>
  <div class="task-stub task-stub-on"></div>
  <div class="task-pin pin-s"><svg class="task-ic" viewBox="0 0 32 28"><path d="M16 2l14 5-3 16-11 4-11-4-3-16z" fill="#d9dfe6"/><path d="M16 2L2 7l14 6 14-6z" fill="#f2f4f6"/><path d="M16 13v14" stroke="#9aa4ae"/><text class="cube-t" x="6" y="23">λ</text><path d="M21 22l2-8" stroke="#1b7a3a" stroke-width="2"/></svg></div>
  <div class="task-pin pin-s"><svg class="task-ic" viewBox="0 0 32 34"><path d="M16 8c-7 0-11 4-11 10s4 11 11 11c5 0 9-2 11-7h-6c-1 2-3 3-5 3-3 0-5-2-5-5h17c1-7-4-12-12-12z" fill="#2a9fe0"/><path d="M11 17c0-3 2-5 5-5s5 2 5 5z" fill="#d6effb"/><path d="M27 2c-8-2-20 6-24 18-2 7 0 11 4 11" fill="none" stroke="#f3c21b" stroke-width="2"/><path d="M24 2c4-1 7 0 6 5" fill="none" stroke="#f3c21b" stroke-width="2"/></svg></div>
  <div class="task-pin pin-s"><svg class="task-ic" viewBox="0 0 32 32"><rect width="32" height="32" fill="#22a0e6"/><path d="M4 8c5-1 9 2 11 7l-3 5-6-1zM28 8c-5-1-9 2-11 7l2 4 4 3 3-3-3-3z" fill="none" stroke="#fff" stroke-width="2"/><path d="M15 15l5 11" stroke="#fff" stroke-width="3"/></svg></div>

  <div class="task-right">
    <span class="addr-label">Dirección</span>
    <div class="addr-box">
      <svg class="chev addr-chev" viewBox="0 0 9 6"><path d="M1 1l3.500 3.500L8 1" fill="none" stroke="#555" stroke-width="1.600"/></svg>
      <div class="addr-go"><svg viewBox="0 0 12 12"><path d="M9.500 7.500a4 4 0 1 1-1-4.500" fill="none" stroke="#777" stroke-width="1.600"/><path d="M6.500 1h4v4z" fill="#777"/></svg></div>
    </div>
    <div class="kbd"><svg viewBox="0 0 30 20"><rect x="0.500" y="0.500" width="29" height="19" fill="#fff" stroke="#8a5a30"/><path d="M4 5h22v11H4z" fill="none" stroke="#6a3f1a"/><path d="M4 8.500h22M4 12h22M8 5v7M12 5v7M16 5v7M20 5v7M24 5v7" stroke="#6a3f1a"/></svg></div>
    <div class="tray"><svg viewBox="0 0 16 16"><path d="M4 10l4-4 4 4z" fill="#e8e8e8"/></svg></div>
    <div class="tray"><svg viewBox="0 0 18 20"><path d="M3 1v18" stroke="#fff" stroke-width="2"/><path d="M4 2h5l1 2h6l-2 3 2 3h-7l-1-2H4z" fill="#fff"/><path d="M5 3h3v4H5z" fill="#9a9a9a"/></svg></div>
    <div class="tray"><svg viewBox="0 0 18 20"><path d="M4.500 1.500h6v7h-6z" fill="#d8e2e8" stroke="#fff"/><path d="M8.500 4.500h8v8h-8zM12 13v3M8 16.500h8" fill="#777" stroke="#fff"/><path d="M2 9v6h6" fill="none" stroke="#fff"/></svg></div>
    <div class="tray"><svg viewBox="0 0 18 20"><path d="M1 7h3l4-5v16l-4-5H1z" fill="#f1f1f1"/><circle cx="12" cy="14" r="5" fill="#e6362c"/><path d="M10 12l4 4M14 12l-4 4" stroke="#fff" stroke-width="1.500"/></svg></div>
    <span class="lang">ESP</span>
    <div class="clock"><span>10:47</span><span>16/02/2018</span></div>
  </div>
</div>

<script src="dither.js"></script>
</body>
</html>
```
FILE: styles.css
```css
* { box-sizing: border-box; }
html, body { margin: 0; padding: 0; }
body {
  width: 1280px; height: 1024px; overflow: hidden; position: relative;
  background: #f2f2f2;
  font: 12px Roboto, "Liberation Sans", Arial, sans-serif;
  color: #000;
}
.edge-mark { position: absolute; left: 0; top: 303px; width: 2px; height: 28px; background: #c8402c; }

/* window frame */
.window {
  margin: 1px 2px 0 2px; height: 982px;
  border: 1px solid #222; border-radius: 6px 6px 0 0;
  padding: 0 2px 2px 3px;
  background: linear-gradient(#8eaccb, #b9d4ee) no-repeat top / 100% 27px, #bfd9f2;
  display: flex; flex-direction: column;
}
.titlebar { height: 26px; display: flex; flex: none; position: relative; }
.app-logo { width: 16px; height: 16px; margin: 6px 0 0 2px; flex: none; }
.title {
  margin-left: 356px; padding-top: 4px; font: 14.500px "Open Sans", sans-serif;
  color: #111; white-space: nowrap;
}
.winctl { margin-left: auto; margin-right: 2px; display: flex; gap: 3px; padding-top: 5px; height: 24px; flex: none; }
.wbtn { width: 31px; height: 18px; border: 1px solid #4d6d90; border-radius: 2px; background: linear-gradient(#b8cde2 0, #9fb9d4 45%, #7d9dbf 50%, #a7c2dd 100%); overflow: hidden; }
.wclose { width: 30px; background: linear-gradient(#dd8a72 0, #d3634a 45%, #b23520 50%, #c25a42 100%); border-color: #7a2a1a; }
.wglyph { display: block; width: 100%; height: 100%; margin: -1px; }

.menubar { height: 18px; flex: none; background: #f5f6f7; display: flex; align-items: center; padding-left: 8px; position: relative; }
.mdi-logo { width: 14px; height: 14px; background: #0b3f8c; color: #fff; font: bold 5.500px "Liberation Sans", sans-serif; line-height: 14px; text-align: center; margin-right: 8px; }
.menu-item { margin-right: 14.500px; font-size: 12px; letter-spacing: -0.2px; white-space: nowrap; color: #111; }
.mdi-ctl { margin-left: auto; display: flex; height: 18px; }
.mbtn { width: 19px; height: 18px; border: 1px solid #c2d0de; background: #f5f6f7; }
.mbtn-on { background: #e6eff9; }
.mbtn svg { display: block; width: 100%; height: 100%; }

/* toolbars */
.strip { flex: none; background: #f0f0f0; display: flex; }
.strip1 { height: 29px; padding-top: 3px; background: linear-gradient(#eceded 0 2px, #a3a3a3 2px 3px, #f0f0f0 3px); }
.strip2 { height: 24px; }
.tb { display: flex; align-items: center; border-right: 1px solid #a3a3a3; border-bottom: 1px solid #a3a3a3; position: relative; }
.tb::before { content: ""; position: absolute; top: 1px; bottom: 1px; left: 4px; width: 1px; background: #a0a0a0; box-shadow: 1px 0 0 #fff; }
.tb-main { padding-left: 6.500px; width: 806px; height: 25px; }
.tb-right { margin-left: auto; width: 190px; height: 26px; padding-left: 8px; border-right: 0; }
.tb-right::before { left: 3px; width: 1px; box-shadow: -1px 0 0 #a0a0a0, 1px 0 0 #fff, 2px 0 0 #fff, 3px 0 0 #a0a0a0; }
.tb-align { padding-left: 5.500px; width: 169px; height: 24px; }
.tbtn, .abtn { width: 23px; height: 22px; display: flex; align-items: center; justify-content: center; flex: none; }
.rbtn { width: 26px; height: 22px; display: flex; align-items: center; justify-content: center; flex: none; }
.tsep { width: 1px; height: 20px; background: #a0a0a0; margin: 0 2.500px; flex: none; }
.ic { width: 16px; height: 16px; fill: none; stroke: #000; stroke-width: 1; display: block; overflow: visible; }
.ic.off { stroke: #a3a3a3; }
.ic.blue { stroke: #0000ff; }
.ic-letter { font: bold 11px "Liberation Serif", serif; fill: #000; stroke: none; }
.rbtn .ic { width: 17px; height: 17px; }
.gray-sq { width: 16px; height: 16px; background: #a3a3a3; }
.checker { width: 14px; height: 14px; background: repeating-conic-gradient(#a3a3a3 0 25%, #efefef 0 50%) 0 0 / 4px 4px; }
.tslider { position: relative; width: 90px; height: 22px; margin-left: 6.500px; flex: none; }
.tslider-track { position: absolute; left: 0; right: 0; top: 4px; height: 5px; background: #e4e4e4; border: 1px solid #cfcfcf; }
.tslider-thumb { position: absolute; left: 81px; top: 1px; width: 8px; height: 13px; }
.tslider-tick { position: absolute; top: 18px; width: 1px; height: 3px; background: #bbb; }
.tick-a { left: 3px; } .tick-b { left: 84px; }

/* property strip */
.props-row { flex: none; height: 53px; background: #f0f0f0; }
.props {
  height: 54px; width: 642px; margin-top: -1px;
  border-right: 1px solid #a3a3a3; border-top: 1px solid #a3a3a3;
  padding-top: 6px; display: grid; align-items: center;
  grid-template-columns: 18px 53px 25px 47px 60px 20px 19px 25px 50px 30px 27px 53px 35px 59px 41px 71px;
  grid-template-rows: 20px 20px; row-gap: 2px;
  font: 12px Roboto, sans-serif; letter-spacing: -0.3px; color: #222;
}
.plabel { padding-left: 2px; }
.type-l { margin-left: 14px; padding: 0; }
.field { width: 100%; height: 18px; padding: 0 3px; border: 1px solid #a8a8a8; background: #fff; font: inherit; letter-spacing: inherit; color: #000; outline: 0; min-width: 0; }
.field.off { background: #efefef; border-color: #d6d6d6; color: #777; }
.ml8 { margin-left: 8px; width: 52px; }
.ml6 { margin-left: 6px; width: 44px; }
.type-i { height: 19px; }
.parrow { width: 18px; height: 8px; justify-self: center; }
.parrow-v { width: 8px; height: 18px; }
.lock-btn { width: 19px; height: 21px; background: #c6e2fa; border: 1px solid #64a8e6; display: flex; align-items: center; justify-content: center; align-self: start; margin-top: 1px; }
.lock-btn svg { width: 12px; height: 15px; }
.rot-btn { width: 19px; height: 21px; margin-left: 6px; border: 1px solid #a8a8a8; background: #e4e4e4; display: flex; align-items: center; justify-content: center; align-self: start; margin-top: 1px; }
.rot-btn svg { width: 13px; height: 13px; }
.deg { font-size: 10px; align-self: start; padding-left: 2px; line-height: 8px; }
.mini-btn { height: 14px; width: 27px; border: 1px solid #d4d4d4; background: #efefef; }
.mini-btn svg { display: block; width: 100%; height: 100%; margin: -1px; }
.circles { grid-row: span 2; width: 43px; height: 39px; margin-left: 10px; align-self: start; margin-top: 1px; }
.pencil { width: 13px; height: 13px; margin-left: 19px; }
.combo { border: 1px solid #acacac; background: linear-gradient(#f3f3f3, #e6e6e6); display: flex; align-items: center; justify-content: space-between; }
.combo-color { width: 59px; height: 23px; background: #fff; justify-content: flex-end; padding-right: 5px; align-self: start; }
.chev { width: 9px; height: 6px; flex: none; }
.pentagon { width: 19px; height: 19px; margin-left: 8px; }
.color-pair { position: relative; width: 15px; height: 15px; align-self: end; margin-left: 15px; }
.cp-back { position: absolute; right: 0; bottom: 0; width: 10px; height: 10px; background: #fff; border: 1px solid #000; }
.cp-front { position: absolute; left: 0; top: 0; width: 10px; height: 10px; background: #000; }

/* workspace */
.workspace { flex: none; height: 783px; display: flex; background: #f0f0f0; }
.dock-left { width: 51px; flex: none; border-right: 2px solid #a0a0a0; border-top: 3px solid #f0f0f0; }
.dock-cols { display: flex; align-items: flex-start; }
.vtb { width: 25px; border-right: 1px solid #a3a3a3; border-bottom: 1px solid #a3a3a3; padding-top: 5px; flex: none; background: #f0f0f0; box-shadow: 0 -1px 0 #fff; }
.vtb-b { width: 24px; }
.vtb-c { margin-top: 14px; padding-top: 7px; }
.vbtn { height: 23px; display: flex; align-items: center; justify-content: center; }
.tool-text { display: inline-block; font: bold 13px "Liberation Serif", serif; transform: scaleX(.66); color: #111; }

.view {
  width: 910px; flex: none; display: grid;
  grid-template-columns: 893px 16px; grid-template-rows: 762px 19px;
  border-top: 2px solid #6a6a6a; border-left: 1px solid #000;
  background: #f0f0f0;
}
.sheet { display: block; width: 893px; height: 762px; }
.bg-gray { fill: #c0c0c0; }
.bg-black { fill: #000; }
.ticks { stroke: #000; fill: none; shape-rendering: crispEdges; }
.ruler-tracker { stroke: #000; shape-rendering: crispEdges; fill: none; }
.ruler-end { stroke: #222; fill: none; shape-rendering: crispEdges; }
.ruler-h text { font: 10.500px Roboto, sans-serif; text-anchor: middle; fill: #111; }
.ruler-v text { font: 11px "Liberation Serif", serif; text-anchor: middle; fill: #111; }
.plate { fill: none; stroke: #d0d0d0; }
.band { fill: none; stroke: #0000ff; }
.page-edge { fill: #000; }
.h-big { font: bold 72px "Liberation Sans", sans-serif; fill: #80ff00; }
.sub { font: bold 21px "Liberation Sans", sans-serif; fill: #0000ff; }
.h-sec { font: 300 40px Roboto, "Liberation Sans", sans-serif; fill: #80ff00; }
.par text { font: 22px "Liberation Sans", sans-serif; fill: #0000ff; stroke: #0000ff; stroke-width: .4; }
.logo { fill: none; stroke: #0000ff; }
.logo-t { font: bold 8px "Liberation Sans", sans-serif; fill: #0000ff; stroke: none; }
.logo-t2 { font: 5px "Liberation Sans", sans-serif; fill: #0000ff; stroke: none; }
.acr { fill: none; }
.acr rect { stroke: currentColor; stroke-width: 1; }
.acr text { font: 31px "Liberation Sans", sans-serif; fill: none; stroke: currentColor; stroke-width: .9; }
.c804000 { color: #804000; } .cff8040 { color: #ff8040; } .c0000ff { color: #0000ff; } .cffff00 { color: #ffff00; } .cffff80 { color: #ffff80; }
.c400000 { color: #400000; } .c800000 { color: #800000; } .c804040 { color: #804040; } .cff0000 { color: #ff0000; } .cff8080 { color: #ff8080; }
.f004040 { fill: #004040; } .f80ff00 { fill: #80ff00; } .f80ff80 { fill: #80ff80; } .f808040 { fill: #808040; } .f80ffff { fill: #80ffff; }
.f008080 { fill: #008080; } .f00ff80 { fill: #00ff80; } .f008000 { fill: #008000; } .f408080 { fill: #408080; } .f004080 { fill: #004080; }
.dither { fill: #fff; shape-rendering: crispEdges; }

.vscroll { position: relative; background: #f0f0f0; }
.sb-arrow { width: 16px; height: 16px; display: block; }
.vthumb { position: absolute; left: 0; top: 190px; width: 16px; height: 101px; background: #cdcdcd; }
.sb-end { position: absolute; bottom: -1px; left: 0; }
.hscroll { background: #f0f0f0; border-top: 1px solid #000; position: relative; height: 19px; }
.hscroll .sb-arrow { position: absolute; left: -1px; top: 0; }
.hscroll .sb-end-h { left: auto; right: 0; }
.hthumb { position: absolute; left: 203px; top: 1px; width: 102px; height: 16px; background: #cdcdcd; }
.corner { background: #f0f0f0; }

/* right panel */
.panel {
  width: 302px; flex: none; margin-left: 5px;
  border-left: 1px solid #a8a8a8; border-top: 2px solid #a8a8a8;
  padding: 4px 0 0 18px;
  font: 12px Roboto, sans-serif; letter-spacing: -0.45px; color: #222;
  background: #f0f0f0;
}
.panel-head { margin-left: -12px; height: 5px; display: flex; align-items: center; margin-bottom: 18px; }
.grip { width: 279px; height: 4px; border-top: 1px solid #a8a8a8; border-bottom: 1px solid #a8a8a8; border-right: 1px solid #a8a8a8; }
.panel-x { width: 7px; height: 7px; margin-left: 5px; }
.group { position: relative; border: 1px solid #dcdcdc; }
.legend { position: absolute; left: 6px; top: -7px; background: #f0f0f0; padding: 0 2px; line-height: 14px; white-space: nowrap; letter-spacing: -0.6px; }
.g-device { width: 260px; height: 47px; padding: 14px 0 0 9px; display: flex; gap: 9px; margin-bottom: 11px; }
.combo-laser { width: 114px; height: 21px; padding: 0 5px 0 3px; }
.ip { width: 114px; height: 20px; background: #fff; border: 1px solid #acacac; white-space: pre; padding-left: 7px; line-height: 18px; word-spacing: 1.400px; }
.g-file { width: 260px; height: 188px; padding: 13px 0 0 9px; display: flex; margin-bottom: 9px; }
.file-left { width: 111px; flex: none; }
.file-list { width: 111px; height: 140px; background: #fff; border: 1px solid #828790; }
.chk { display: flex; align-items: center; gap: 3px; height: 13px; white-space: nowrap; }
.chk-rev { margin: 9px 0 0 2px; }
.box { display: block; width: 13px; height: 13px; background: #fff; border: 1px solid #707070; flex: none; }
.box svg { display: block; width: 11px; height: 11px; }
.file-right { margin-left: 15px; width: 111px; display: flex; flex-direction: column; gap: 3.670px; }
.btn { background: linear-gradient(#f0f0f0, #e5e5e5); border: 1px solid #acacac; display: flex; align-items: center; justify-content: center; text-align: center; }
.play-row { display: flex; gap: 11px; padding: 3px 0 0 1px; margin-bottom: 2.330px; }
.big { width: 49px; height: 47px; }
.big-off { background: #efefef; border-color: #d9d9d9; }
.play { width: 20px; height: 21px; }
.stop { width: 20px; height: 20px; background: #6aa5e2; }
.act { height: 24px; }
.group-row { display: flex; gap: 14px; }
.g-safe { width: 137px; height: 61px; padding: 14px 0 0 5px; display: flex; flex-direction: column; gap: 11px; }
.g-add { width: 108px; height: 61px; padding: 15px 0 0 11px; }
.lower { display: flex; margin-left: -8px; align-items: flex-start; }
.pad-col { width: 172px; flex: none; padding-top: 3px; }
.pad { display: grid; grid-template-columns: 60px 49px 63px; grid-template-rows: 56px 47px 48px; row-gap: 11px; }
.tri { display: block; width: 49px; overflow: visible; }
.up { height: 47px; align-self: end; }
.left { height: 47px; }
.right { height: 47px; margin-left: 12px; }
.down { height: 48px; }
.y-cell { display: flex; align-items: flex-start; gap: 7px; padding-left: 9px; line-height: 20px; }
.y-cell .field { width: 44px; height: 20px; flex: none; }
.x-cell { display: flex; align-self: end; align-items: center; gap: 7px; padding-left: 2px; margin-bottom: -9px; }
.x-cell .field { width: 44px; height: 20px; flex: none; }
.kb { width: 49px; height: 45px; line-height: 13px; align-self: center; }
.chk-rel { margin: 15px 0 0 12px; }
.cmd-col { margin-top: 19px; width: 94px; display: flex; flex-direction: column; gap: 2.500px; }
.cmd { height: 27px; line-height: 13px; }
.cmd-focus { border: 1px solid #3c9be8; }
.cmd-two { padding: 0; white-space: nowrap; }
.cmd-last { margin-top: 2px; }

/* colour bar and status */
.colorbar { flex: none; height: 24px; background: #f0f0f0; border-top: 1px solid #fff; border-bottom: 1px solid #a3a3a3; }
.cb-tools { width: 265px; height: 22px; display: flex; align-items: center; padding-left: 9px; border-right: 1px solid #a3a3a3; position: relative; }
.cb-tools::before { content: ""; position: absolute; left: 2px; top: 0; bottom: 0; width: 1px; background: #a0a0a0; box-shadow: 1px 0 0 #fff; }
.cbtn { width: 22px; height: 20px; display: flex; align-items: center; justify-content: center; flex: none; }
.csep { width: 1px; height: 18px; margin: 0 3px; background: #a3a3a3; flex: none; }
.sw { display: block; width: 16px; height: 16px; border: 1px solid #000; }
.swwhite { background: #fff; } .swred { background: #ff0000; } .swnone { background: #f0f0f0; } .swgreen { background: #00ff00; } .swcyan { background: #00ffff; } .swmag { background: #ff00ff; } .swblue { background: #0000ff; } .swolive { background: #808000; }
.swdash { background: linear-gradient(90deg, #000 50%, #f0f0f0 50%) 0 6px / 2px 1px repeat-x, #f0f0f0; }
.statusbar { flex: none; height: 21px; background: #f0f0f0; display: flex; align-items: center; font: 12px Roboto, sans-serif; letter-spacing: -0.3px; padding: 3px 0 0 2px; color: #222; }
.status-pos { margin-left: auto; width: 112px; letter-spacing: -0.6px; }
.status-grip { width: 19px; height: 18px; border-left: 1px solid #dcdcdc; padding: 4px 0 0 7px; }
.status-grip svg { width: 12px; height: 12px; display: block; }

/* taskbar */
.taskbar {
  height: 41px; display: flex; padding-left: 16px; align-items: flex-start;
  background:
    linear-gradient(100deg, transparent 30%, rgba(255,220,170,.08) 38%, transparent 48%),
    linear-gradient(80deg, transparent 60%, rgba(255,220,170,.09) 70%, transparent 82%),
    linear-gradient(#b4763f, #ad6f3a);
  color: #fff;
}
.task { height: 38px; margin-top: 2px; margin-right: 3px; background: rgba(255,255,255,.16); border: 1px solid rgba(255,240,225,.3); display: flex; align-items: center; justify-content: center; flex: none; }
.task-w59 { width: 59px; }
.task-w54 { width: 54px; }
.ml-chrome { margin-right: 1px; }
.task-stub { width: 4px; height: 38px; margin-top: 2px; margin-right: 3px; background: rgba(255,255,255,.16); border: 1px solid rgba(255,240,225,.3); flex: none; }
.task-on { background: rgba(255,255,255,.32); border: 2px solid #f3ece4; margin-right: 1px; }
.task-stub-on { border: 1px solid #f3ece4; margin-right: 0; }
.task-pin { height: 38px; margin-top: 2px; display: flex; align-items: center; justify-content: center; flex: none; }
.pin-a { width: 62px; }
.pin-s { width: 62.500px; }
.task-ic { width: 31px; height: 33px; display: block; }
.task-logo { width: 32px; height: 32px; }
.cube-t { font: bold 13px "Liberation Serif", serif; fill: #1b2f8f; }
.task-right { margin-left: auto; display: flex; height: 41px; align-items: center; font: 12px "Noto Sans", "Open Sans", sans-serif; color: #fff; }
.addr-label { width: 56px; letter-spacing: -.3px; white-space: nowrap; }
.addr-box { width: 227px; height: 20px; background: #fff; display: flex; align-items: center; justify-content: flex-end; }
.addr-chev { margin-right: 5px; }
.addr-go { width: 24px; height: 20px; border-left: 1px solid #ccc; display: flex; align-items: center; justify-content: center; }
.addr-go svg { width: 12px; height: 12px; }
.kbd { width: 30px; height: 20px; margin-left: 14px; margin-right: 5px; }
.kbd svg { display: block; width: 30px; height: 20px; }
.tray { width: 24px; height: 24px; display: flex; align-items: center; justify-content: center; }
.tray svg { width: 18px; height: 20px; }
.lang { width: 34px; margin-left: 5px; text-align: center; letter-spacing: -.3px; }
.clock { width: 56px; margin: 2px 26px 0 14px; display: flex; flex-direction: column; align-items: center; line-height: 16px; letter-spacing: -.4px; white-space: nowrap; }
```
FILE: dither.js
```js
(function () {
  var h = "", v = "";
  var i, x, y, len;
  for (i = -22; i <= 120; i++) {
    x = Math.round(212.3 + i * 6.03) + 0.5;
    if (x < 78 || x > 950) continue;
    len = i % 10 === 0 ? 7 : (i % 5 === 0 ? 4 : 2);
    h += "M" + x + " 173v-" + len;
  }
  h += "M78 173.500H951";
  for (i = -1; i <= 120; i++) {
    y = Math.round(183.3 + i * 6.03) + 0.5;
    if (y < 173 || y > 915) continue;
    len = i % 10 === 0 ? 7 : (i % 5 === 0 ? 4 : 2);
    v += "M77 " + y + "h-" + len;
  }
  v += "M77.500 173V916";
  document.getElementById("ticks-h").setAttribute("d", h);
  document.getElementById("ticks-v").setAttribute("d", v);

  /* the engraved photo: a left-to-right ramp with a dark and a light disc,
     dithered through a 2x2 threshold matrix on 2px blocks */
  var matrix = [[0.125, 0.625], [0.875, 0.375]];
  function tone(px, py, W, H) {
    var t = 0.28 + 0.52 * (px / (W - 1));
    var edge = Math.abs(py - (H - 1) / 2) / ((H - 1) / 2);
    t += 0.12 * edge * edge;
    if (px < 2) t = (py % 6 < 3) ? 0.95 : 0.05;
    var d1 = Math.hypot(px - 22, py - 22);
    var d2 = Math.hypot(px - 62, py - 22);
    if (d1 < 9.5) t = 0;
    if (d2 < 11) t = 1;
    return t;
  }
  function lit(px, py, W, H) {
    var cx = px - (px % 2), cy = py - (py % 2);
    var d1 = Math.hypot(px - 22, py - 22), d2 = Math.hypot(px - 62, py - 22);
    var t = (d1 < 9.5 || d2 < 11) ? tone(px, py, W, H) : tone(cx, cy, W, H);
    return t > matrix[(cy / 2) % 2][(cx / 2) % 2];
  }
  function build(W, H) {
    var d = "";
    for (var py = 0; py < H; py++) {
      var px = 0;
      while (px < W) {
        if (lit(px, py, W, H)) {
          var start = px;
          while (px < W && lit(px, py, W, H)) px++;
          d += "M" + start + " " + py + "h" + (px - start) + "v1h-" + (px - start) + "z";
        } else {
          px++;
        }
      }
    }
    return d;
  }
  var path = build(85, 43);
  ["d1", "d2", "d3", "d4"].forEach(function (id) {
    document.getElementById(id).setAttribute("d", path);
  });
})();
```
